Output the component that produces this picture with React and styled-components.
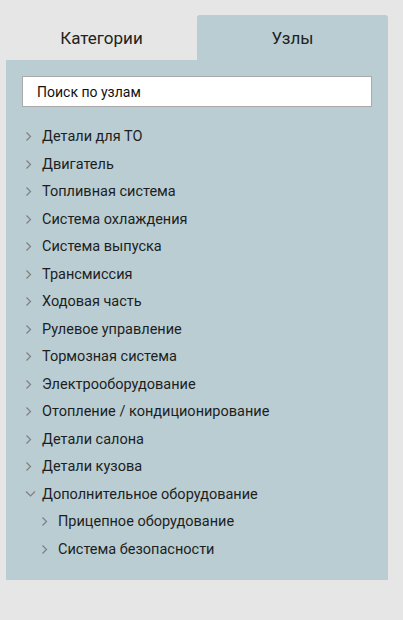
import React from "react";
import styled, { createGlobalStyle } from "styled-components";

const GlobalStyle = createGlobalStyle`
  body {
    margin: 0;
    background: #e6e6e6;
    font-family: Roboto, "Liberation Sans", sans-serif;
  }
`;

const Page = styled.div`
  width: 382px;
  padding: 15px 0 40px 6px;
`;

const Tabs = styled.div`
  display: grid;
  grid-template-columns: 191px 191px;
`;

const Tab = styled.div`
  height: 45px;
  display: flex;
  align-items: center;
  justify-content: center;
  font-size: 17px;
  color: #222;
  border-radius: 3px 3px 0 0;
  background: ${(props) => (props.active ? "#b9cdd3" : "transparent")};
`;

const Panel = styled.div`
  background: #b9cdd3;
  height: 520px;
  padding: 16px 16px 0 16px;
  box-sizing: border-box;
`;

const Search = styled.div`
  height: 31px;
  box-sizing: border-box;
  border: 1px solid #aaa;
  background: #fff;
  padding-left: 14px;
  display: flex;
  align-items: center;
  font-size: 14px;
  color: #111;
`;

const List = styled.ul`
  list-style: none;
  margin: 16px 0 0 0;
  padding: 0;
`;

const Row = styled.li`
  height: 27.5px;
  display: flex;
  align-items: center;
  padding-left: ${(props) => (props.sub ? 16 : 0)}px;
  font-size: 14.5px;
  color: #1e1e1e;
`;

const IconBox = styled.span`
  width: 20px;
  display: flex;
  align-items: center;
  padding-left: 3px;
  box-sizing: border-box;
`;

const ChevronRight = () => (
  <svg width="8" height="11" viewBox="0 0 8 11">
    <path d="M1.5 1.5 L5.5 5.5 L1.5 9.5" fill="none" stroke="#808080" strokeWidth="1.2" />
  </svg>
);

const ChevronDown = () => (
  <svg width="11" height="8" viewBox="0 0 11 8">
    <path d="M1 1.5 L5.5 6 L10 1.5" fill="none" stroke="#808080" strokeWidth="1.2" />
  </svg>
);

const items = [
  "Детали для ТО",
  "Двигатель",
  "Топливная система",
  "Система охлаждения",
  "Система выпуска",
  "Трансмиссия",
  "Ходовая часть",
  "Рулевое управление",
  "Тормозная система",
  "Электрооборудование",
  "Отопление / кондиционирование",
  "Детали салона",
  "Детали кузова",
];

const subItems = ["Прицепное оборудование", "Система безопасности"];

const App = () => {
  return (
    <Page>
      <GlobalStyle />
      <Tabs>
        <Tab>Категории</Tab>
        <Tab active>Узлы</Tab>
      </Tabs>
      <Panel>
        <Search>Поиск по узлам</Search>
        <List>
          {items.map((name) => (
            <Row key={name}>
              <IconBox><ChevronRight /></IconBox>
              {name}
            </Row>
          ))}
          <Row>
            <IconBox><ChevronDown /></IconBox>
            Дополнительное оборудование
          </Row>
          {subItems.map((name) => (
            <Row sub key={name}>
              <IconBox><ChevronRight /></IconBox>
              {name}
            </Row>
          ))}
        </List>
      </Panel>
    </Page>
  );
};

export default App;
